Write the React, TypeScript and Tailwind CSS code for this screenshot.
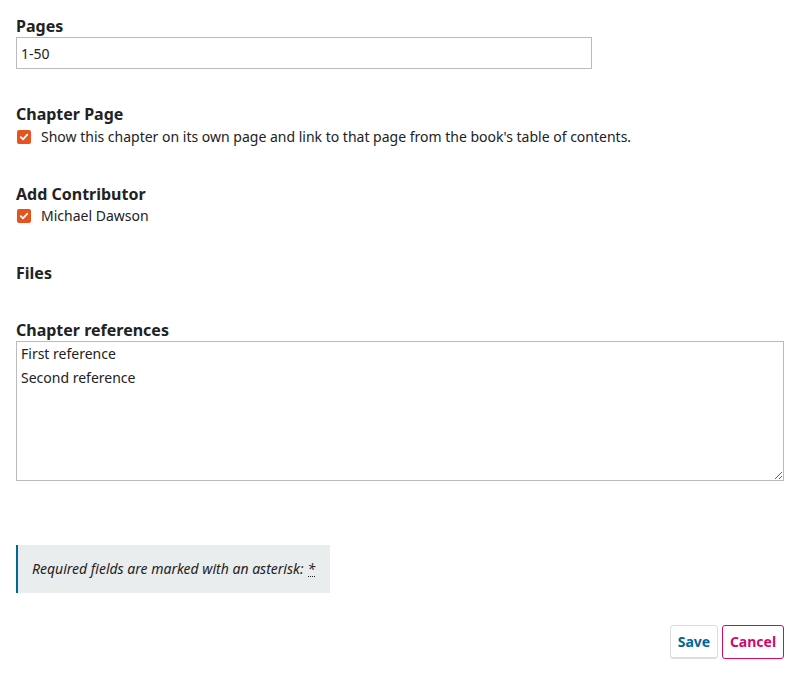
import React from 'react'

const font = { fontFamily: '"Noto Sans", "Open Sans", sans-serif' }

function Check({ label }: { label: string }): React.JSX.Element {
  return (
    <label className="flex items-center h-5 text-sm text-[#222]">
      <span className="ml-px w-3.5 h-3.5 rounded-[2px] bg-[#e5541e] flex items-center justify-center">
        <svg width="10" height="10" viewBox="0 0 10 10" fill="none">
          <path d="M1.8 5.2 L4 7.3 L8.3 2.6" stroke="white" strokeWidth="1.8" strokeLinecap="round" strokeLinejoin="round" />
        </svg>
      </span>
      <span className="ml-[10px]">{label}</span>
    </label>
  )
}

function SectionLabel({ children }: { children: React.ReactNode }): React.JSX.Element {
  return <div className="text-base font-bold leading-5 text-[#222]">{children}</div>
}

export default function App(): React.JSX.Element {
  return (
    <div style={font} className="w-[800px] h-[675px] bg-white rounded-b-[4px] px-4 pt-4 text-[#222] overflow-hidden">
      {/* Pages */}
      <SectionLabel>Pages</SectionLabel>
      <input
        className="mt-px block w-[576px] h-8 border border-[#bbb] px-1 text-sm text-[#222] outline-none"
        defaultValue="1-50"
      />

      {/* Chapter page */}
      <div className="mt-[35px]">
        <SectionLabel>Chapter Page</SectionLabel>
        <div className="mt-[3px]">
          <Check label="Show this chapter on its own page and link to that page from the book's table of contents." />
        </div>
      </div>

      {/* Contributors */}
      <div className="mt-[37px]">
        <SectionLabel>Add Contributor</SectionLabel>
        <div className="mt-[2px]">
          <Check label="Michael Dawson" />
        </div>
      </div>

      {/* Files */}
      <div className="mt-[37px]">
        <SectionLabel>Files</SectionLabel>
      </div>

      {/* References */}
      <div className="mt-[37px]">
        <SectionLabel>Chapter references</SectionLabel>
        <textarea
          className="mt-px block w-full h-[140px] border border-[#bbb] px-1 py-0 text-sm leading-6 text-[#222] outline-none"
          defaultValue={'First reference\nSecond reference'}
        />
      </div>

      {/* Required notice */}
      <div className="mt-16 w-[314px] h-12 bg-[#eaedee] border-l-2 border-[#006798] flex items-center pl-[14px] text-sm italic text-[#222]">
        Required fields are marked with an asterisk:{' '}
        <abbr className="ml-1 no-underline border-b border-dotted border-[#222] leading-[14px]">*</abbr>
      </div>

      {/* Actions */}
      <div className="mt-8 flex justify-end gap-1">
        <button className="h-[34px] w-12 rounded-[3px] border border-[#ddd] shadow-[inset_0_-1px_0_#ddd] bg-white text-sm font-bold text-[#006798]">
          Save
        </button>
        <button className="h-[34px] w-[62px] rounded-[3px] border border-[#d00a6c] bg-white text-sm font-bold text-[#d00a6c]">
          Cancel
        </button>
      </div>
    </div>
  )
}
